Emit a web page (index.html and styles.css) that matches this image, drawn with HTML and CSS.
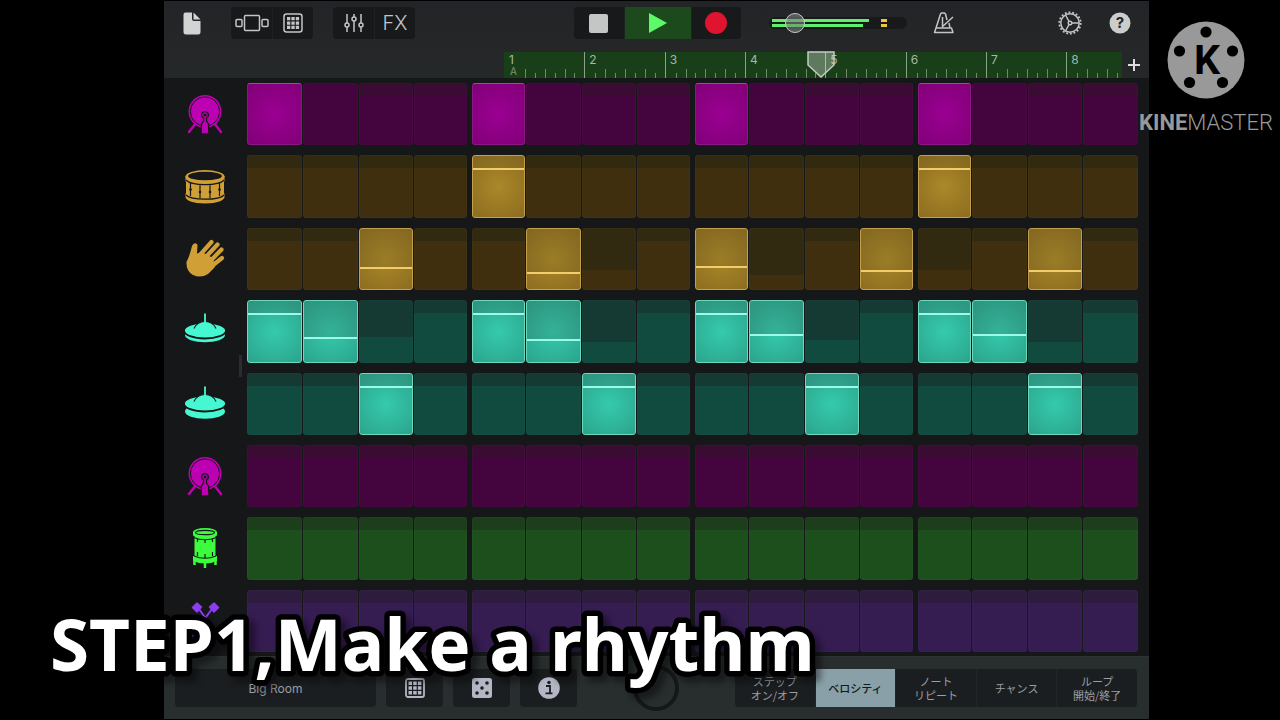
FILE: index.html
```html
<!DOCTYPE html>
<html lang="ja">
<head>
<meta charset="utf-8">
<meta name="viewport" content="width=device-width, initial-scale=1">
<title>Beat Sequencer</title>
<link rel="stylesheet" href="styles.css">
</head>
<body>
<svg class="sprite" aria-hidden="true">
  <symbol id="kick" viewBox="0 0 40 40">
    <path d="M11 29 4 38M29 29l7 9" stroke="currentColor" stroke-width="2.5" stroke-linecap="round"/>
    <circle cx="20" cy="17.5" r="16.5" fill="currentColor"/>
    <circle cx="20" cy="17.5" r="14.6" fill="none" stroke="#161719" stroke-width="1"/>
    <path d="M16 40l.5-10 2-3v-3a3.4 3.4 0 1 1 3 0v3l2 3 .5 10z" fill="currentColor" stroke="#161719" stroke-width="1.3"/>
    <circle cx="20" cy="21" r="1.6" fill="#161719"/>
  </symbol>
  <symbol id="snare" viewBox="0 0 40 40">
    <path d="M.5 9v21c0 3 7 6.500 19.500 6.500S39.500 33 39.500 30V9z" fill="currentColor"/>
    <ellipse cx="20" cy="9.500" rx="19.500" ry="6.500" fill="currentColor"/>
    <ellipse cx="20" cy="9" rx="17" ry="4.300" fill="#161719"/>
    <path d="M.8 13c3 3 11 4.600 19.200 4.600S36.500 16 39.200 13M1 28c3 3 11 4.200 19 4.200S36.500 31 39 28M5.500 16v13M15 18v13M25 18v13M34.500 16v13" fill="none" stroke="#161719" stroke-width="1.2"/>
    <path d="M0 14.500v12M40 14.500v12" stroke="#161719" stroke-width="2"/>
    <g fill="#161719"><circle cx="5.500" cy="22.500" r="1.300"/><circle cx="15" cy="25" r="1.300"/><circle cx="25" cy="25" r="1.300"/><circle cx="34.500" cy="22.500" r="1.300"/></g>
  </symbol>
  <symbol id="clap" viewBox="0 0 40 40">
    <path d="M8 5.500q3-2.500 4.500.5L12 14.500 17 13 28 19 30 28 23 35Q16 39.500 8 36 1 32 1.500 23 5 16 7 7z" fill="currentColor"/>
    <path d="M15 16 26.500 3M19 20 32.500 5.500M22.500 25 36.500 10.500M25 28.500 37 19" stroke="currentColor" stroke-width="4.200" stroke-linecap="round"/>
  </symbol>
  <symbol id="hat-closed" viewBox="0 0 40 40">
    <ellipse cx="20" cy="24" rx="20" ry="7.300" fill="currentColor"/>
    <ellipse cx="20" cy="19.500" rx="21" ry="8" fill="currentColor" stroke="#161719" stroke-width="1.800"/>
    <path d="M9 17.500C11 13 15 10.500 20 10.500S29 13 31 17.500" fill="currentColor" stroke="#161719" stroke-width="1.200"/>
    <path d="M20 2.500V12" stroke="currentColor" stroke-width="1.800"/>
  </symbol>
  <symbol id="hat-open" viewBox="0 0 40 40">
    <ellipse cx="20" cy="27.500" rx="20" ry="7.300" fill="currentColor"/>
    <ellipse cx="20" cy="19.500" rx="21" ry="8" fill="currentColor" stroke="#161719" stroke-width="1.800"/>
    <path d="M9 17.500C11 13 15 10.500 20 10.500S29 13 31 17.500" fill="currentColor" stroke="#161719" stroke-width="1.200"/>
    <path d="M20 2.500V12" stroke="currentColor" stroke-width="1.800"/>
  </symbol>
  <symbol id="tom" viewBox="0 0 40 40">
    <path d="M9.500 5v26q10.500 5 21 0V5z" fill="currentColor"/>
    <path d="M8 28v5q12 5 24 0v-5" fill="currentColor"/>
    <path d="M9.500 30v7M20 34v6M30.500 30v7" stroke="currentColor" stroke-width="2.500"/>
    <ellipse cx="20" cy="4.500" rx="12" ry="4.500" fill="currentColor"/>
    <path d="M8 4v3.500q12 6 24 0V4" fill="currentColor"/>
    <ellipse cx="20" cy="4.500" rx="9.500" ry="2.200" fill="none" stroke="#161719" stroke-width="1.200"/>
    <path d="M8.500 9.500q11.500 4.500 23 0M9 28q11 4.500 22 0M12.500 11v3M20 12v3M27.500 11v3M12.500 24v4M20 26v4M27.500 24v4" fill="none" stroke="#161719" stroke-width="1.200"/>
  </symbol>
  <symbol id="sticks" viewBox="0 0 40 40">
    <path d="M14 8 34 36M27 8 6 36" stroke="currentColor" stroke-width="2"/>
    <path d="M12 2l4.500 4-4.500 5-4.500-4.500zM29 2l-4.500 4 4.500 5 4.500-4.500z" fill="currentColor" stroke="currentColor" stroke-width="1.500" stroke-linejoin="round"/>
  </symbol>
  <symbol id="pads" viewBox="0 0 20 20">
    <rect x="1" y="1" width="18" height="18" rx="2.500" fill="none" stroke="currentColor" stroke-width="1.500"/>
    <path d="M4 4h3.300v3.300H4zM8.400 4h3.300v3.300H8.400zM12.800 4h3.300v3.300h-3.300zM4 8.400h3.300v3.300H4zM8.400 8.400h3.300v3.300H8.400zM12.800 8.400h3.300v3.300h-3.300zM4 12.800h3.300v3.300H4zM8.400 12.800h3.300v3.300H8.400zM12.800 12.800h3.300v3.300h-3.300z" fill="currentColor"/>
  </symbol>
</svg>

<main class="app">
  <header class="top">
    <div class="toolbar">
      <div class="tools-left">
        <button class="plain" aria-label="Songs">
          <svg width="18" height="23" viewBox="0 0 18 23"><path d="M2.500.5H9V7q0 2 2 2h6.500v11q0 2.500-2.500 2.500H3Q.5 22.500.5 20V2.500q0-2 2-2z" fill="#d2d3d3"/><path d="M10.500.5 17.500 7.500h-7z" fill="#d2d3d3"/></svg>
        </button>
        <div class="group">
          <button aria-label="Instruments"><svg width="34" height="18" viewBox="0 0 34 18"><g fill="none" stroke="currentColor" stroke-width="1.500"><rect x="9.500" y="1.500" width="15" height="15" rx="1"/><rect x="1" y="5.500" width="6" height="7" rx="1"/><rect x="27" y="5.500" width="6" height="7" rx="1"/></g></svg></button>
          <button aria-label="Grid view"><svg width="20" height="20"><use href="#pads"/></svg></button>
        </div>
        <div class="group">
          <button aria-label="Mixer"><svg width="20" height="20" viewBox="0 0 20 20"><g fill="none" stroke="currentColor" stroke-width="1.500"><path d="M3 1v9M3 14v5M10 1v3M10 8v11M17 1v9M17 14v5"/><circle cx="3" cy="12" r="2"/><circle cx="10" cy="6" r="2"/><circle cx="17" cy="12" r="2"/></g></svg></button>
          <button class="fx">FX</button>
        </div>
      </div>
      <div class="group transport">
        <button aria-label="Stop"><svg width="19" height="19"><rect width="19" height="19" rx="2" fill="#c4c5c5"/></svg></button>
        <button class="play" aria-label="Play"><svg width="18" height="20" viewBox="0 0 18 20"><path d="M0 0l18 10L0 20z" fill="#5cfa6a"/></svg></button>
        <button aria-label="Record"><svg width="22" height="22"><circle cx="11" cy="11" r="11" fill="#e1142f"/></svg></button>
      </div>
      <div class="tools-right">
        <div class="volume">
          <div class="meter"><i class="bar-l"></i><i class="bar-r"></i><b class="peak"></b></div>
          <input type="range" min="0" max="100" value="14" aria-label="Volume">
        </div>
        <button class="plain metronome" aria-label="Metronome"><svg width="22" height="22" viewBox="0 0 22 22"><g fill="none" stroke="currentColor" stroke-width="1.500" stroke-linejoin="round"><path d="M14 8 12.500 2Q12 1 11 1H9Q8 1 7.500 2L3 16M16 11l1 5M3 16H18.500L20 20.500H1.500zM9.500 5v9M9 15 20 5"/></g></svg></button>
        <button class="plain gear" aria-label="Settings"><svg width="24" height="24" viewBox="0 0 24 24"><g fill="none" stroke="currentColor"><circle cx="12" cy="12" r="10.700" stroke-width="1.800" stroke-dasharray="1.900 1.835"/><circle cx="12" cy="12" r="9.200" stroke-width="1.500"/><circle cx="12" cy="12" r="1.800" stroke-width="1.400"/><path d="M14 12h7M11 10.300 7.500 4M11 13.700 7.500 20" stroke-width="1.400"/></g></svg></button>
        <button class="plain" aria-label="Help"><svg width="22" height="22" viewBox="0 0 22 22"><circle cx="11" cy="11" r="10.500" fill="#cbcccc"/><text class="badge-char" x="11" y="16" text-anchor="middle">?</text></svg></button>
      </div>
    </div>
    <div class="timeline">
      <div class="ruler" id="ruler">
        <svg class="playhead" width="28" height="27" viewBox="0 0 28 27"><path d="M1 1h26v13L14 26 1 14z" fill="#ffffff" fill-opacity=".3" stroke="#c4cbc4" stroke-width="1.500"/></svg>
      </div>
      <button class="plain add" aria-label="Add section"><svg width="14" height="14" viewBox="0 0 14 14"><path d="M7 1v12M1 7h12" stroke="#dcdcdc" stroke-width="2"/></svg></button>
    </div>
  </header>

  <section class="tracks" id="tracks" aria-label="Pattern"><span class="handle"></span></section>

  <footer class="bottom">
    <button class="kit">Big Room</button>
    <button class="tile" aria-label="Patterns"><svg width="20" height="20" viewBox="0 0 20 20"><rect x="1" y="1" width="18" height="18" rx="2" fill="none" stroke="currentColor" stroke-width="1.800"/><path d="M3.500 3.500h3.500v3.500H3.500zM8.200 3.500h3.500v3.500H8.200zM12.900 3.500h3.500v3.500h-3.500zM3.500 8.200h3.500v3.500H3.500zM8.200 8.200h3.500v3.500H8.200zM12.900 8.200h3.500v3.500h-3.500zM3.500 12.900h3.500v3.500H3.500zM8.200 12.900h3.500v3.500H8.200zM12.900 12.900h3.500v3.500h-3.500z" fill="currentColor"/></svg></button>
    <button class="tile" aria-label="Randomize"><svg width="20" height="20" viewBox="0 0 20 20"><rect width="20" height="20" rx="2.500" fill="currentColor"/><g fill="#1b1d1f"><circle cx="5" cy="5" r="1.800"/><circle cx="15" cy="5" r="1.800"/><circle cx="10" cy="10" r="1.800"/><circle cx="5" cy="15" r="1.800"/><circle cx="15" cy="15" r="1.800"/></g></svg></button>
    <button class="tile" aria-label="Info"><svg width="22" height="22" viewBox="0 0 22 22"><circle cx="11" cy="11" r="10.800" fill="currentColor"/><circle cx="11" cy="5.500" r="1.700" fill="#1b1d1f"/><path d="M8 9h4v7M7.500 16.300h7" fill="none" stroke="#1b1d1f" stroke-width="1.800"/></svg></button>
    <button class="knob" aria-label="Home"></button>
    <div class="modes">
      <button>ステップ<br>オン/オフ</button>
      <button class="selected" aria-pressed="true">ベロシティ</button>
      <button>ノート<br>リピート</button>
      <button>チャンス</button>
      <button>ループ<br>開始/終了</button>
    </div>
  </footer>
</main>

<aside class="brand">
  <svg width="78" height="78" viewBox="0 0 78 78"><circle cx="39" cy="39" r="38.500" fill="#999"/><g fill="#000"><circle cx="39" cy="11" r="5.600"/><circle cx="12.500" cy="30" r="5.600"/><circle cx="65.500" cy="30" r="5.600"/><circle cx="22.500" cy="61.500" r="5.600"/><circle cx="55.500" cy="61.500" r="5.600"/></g><text class="brand-k" x="40" y="53" text-anchor="middle">K</text></svg>
  <p><b>KINE</b>MASTER</p>
</aside>
<svg class="caption" width="840" height="100"><text x="20" y="67">STEP1,Make a rhythm</text></svg>
<script src="app.js"></script>
</body>
</html>
```

FILE: styles.css
```css
* { box-sizing: border-box; }
body {
  margin: 0;
  min-height: 100vh;
  padding: 1px 131px 1px 164px;
  display: flex;
  position: relative;
  overflow: hidden;
  background: #000;
  color: #c4c5c6;
  font-family: Inter, "Noto Sans CJK JP", sans-serif;
}
button { margin: 0; padding: 0; border: 0; background: none; color: inherit; font: inherit; }
button svg { display: block; }
.sprite { position: absolute; width: 0; height: 0; }
.app { flex: 1; min-width: 0; display: flex; flex-direction: column; background: #161719; }

.top { background: linear-gradient(#232427, #252829); height: 77px; display: flex; flex-direction: column; justify-content: space-between; }
.toolbar { display: grid; grid-template-columns: 1fr auto 1fr; align-items: center; padding: 6px 18px 0 19px; }
.tools-left, .tools-right { display: flex; align-items: center; }
.tools-left { gap: 20px; }
.tools-left .plain { margin-right: 10px; }
.group { display: flex; height: 32px; border-radius: 4px; background: #17191a; overflow: hidden; }
.group button { width: 41px; display: flex; align-items: center; justify-content: center; }
.group button + button { border-left: 1px solid #1f2223; }
.fx { font-size: 20px; font-weight: 300; }
.transport button { width: 50px; }
.transport .play { width: 67px; background: #1d4a1d; }
.tools-right { padding-left: 28px; }
.plain { display: grid; place-items: center; }
.metronome { margin-left: 26px; }
.gear { margin-left: auto; margin-right: 27px; }
.volume { width: 138px; height: 20px; display: grid; align-items: center; }
.volume > * { grid-area: 1 / 1; }
.meter { height: 12px; border-radius: 6px; background: #17191a; display: grid; grid-template-columns: 3px 97px 12px 6px 1fr; gap: 2px 0; padding: 2px 0; }
.meter i { background: #5ef06c; grid-column: 2; }
.meter .bar-r { margin-right: 6px; }
.meter .peak { grid-column: 4; grid-row: 1 / 3; background: linear-gradient(#edc53f 3px, #17191a 3px, #17191a 5px, #edc53f 5px); }
.volume input { width: 100%; height: 20px; margin: 0; appearance: none; background: none; }
.volume input::-webkit-slider-thumb { appearance: none; width: 20px; height: 20px; border: 1px solid #c6cbc6; border-radius: 50%; background: rgba(120, 130, 120, .6); }

.badge-char { font: 700 15px Inter, sans-serif; fill: #232427; }

.timeline { display: flex; align-items: center; padding: 0 8px 0 340px; }
.ruler { position: relative; flex: 1; height: 26px; display: flex; background: #193f18; }
.bar { flex: 0 0 13%; min-width: 0; height: 26px; border-left: 1px solid #8aa18a; position: relative; display: flex; align-items: flex-end; }
.bar:first-of-type { border-left-color: transparent; }
.bar:nth-of-type(8) { flex: 1; overflow: hidden; }
.bar:nth-of-type(8) .tick { flex: 0 0 10px; }
.bar label { position: absolute; left: 4px; top: 0; font-size: 12px; line-height: 15px; color: #a5b7a4; }
.bar small { position: absolute; left: 5px; top: 13px; font-size: 10px; line-height: 12px; color: #7c947b; }
.tick { flex: 1; height: 5px; border-left: 1px solid #6d8a6c; }
.tick:nth-of-type(odd) { height: 9px; }
.tick:first-of-type, .bar:first-of-type .tick:nth-of-type(2) { border-color: transparent; }
.playhead { position: absolute; left: 49%; top: -1px; z-index: 1; }
.add { margin-left: 5px; }

.tracks { position: relative; flex: 1; display: flex; flex-direction: column; gap: 10px; padding: 5px 11px 4px 0; }
.handle { position: absolute; left: 75px; top: 277px; width: 3px; height: 22px; background: #2b2c2f; }
.track { flex: 1; display: grid; grid-template-columns: 82px 1fr; gap: 1px; min-height: 40px; }
.track-icon { display: grid; place-items: center; color: var(--icon); }
.steps { display: grid; grid-template-columns: repeat(16, 1fr); gap: 1px; }
.step { position: relative; border-radius: 3px; border: 1px solid rgba(255, 255, 255, .02); background: linear-gradient(var(--off-top) var(--level), var(--off) var(--level)); background-origin: border-box; }
.step:nth-child(4n) { margin-right: 2px; }
.step:nth-child(4n + 1) { margin-left: 2px; }
.step:first-child, .step:last-child { margin: 0; }
.step.on {
  border-color: var(--edge);
  background:
    linear-gradient(transparent calc(var(--level) - 1px), var(--line) calc(var(--level) - 1px), var(--line) calc(var(--level) + 1px), transparent calc(var(--level) + 1px)),
    linear-gradient(var(--shade) var(--level), transparent var(--level)),
    radial-gradient(circle at 50% 50%, var(--on), var(--on-edge) 40px);
  background-origin: border-box;
}
.purple { --icon: #bd00b1; --off: #44043e; --off-top: #3a0c34; --on: #9a0091; --on-edge: #810078; --edge: #8c1784; --line: #ae38a6; --shade: transparent; }
.purple .on { border-top-color: #b23aaa; }
.gold { --icon: #d0a036; --off: #3f2f0f; --off-top: #322911; --on: #ab8829; --on-edge: #8c6c20; --edge: #c2a04e; --line: #f3cd6c; --shade: rgba(90, 80, 30, .2); }
.teal { --icon: #46f8d2; --off: #114a3e; --off-top: #143a33; --on: #35caad; --on-edge: #2ba48c; --edge: #6cd9bd; --line: #9dfae8; --shade: rgba(50, 80, 70, .2); }
.green { --icon: #3bfd3d; --off: #1d4f1d; --off-top: #1c3e1b; }
.violet { --icon: #8d3df0; --off: #351c51; --off-top: #2d1c3e; }

.bottom { height: 63px; display: flex; align-items: center; gap: 10px; padding: 0 12px 0 11px; background: #282d2e; border-top: 1px solid #2d3233; }
.bottom button { height: 38px; color: #9b9fa4; font-size: 12px; }
.bottom .kit { flex: 0 0 201px; border-radius: 4px; background: #1b1e20; }
.bottom .tile { flex: 0 0 57px; display: grid; place-items: center; border-radius: 4px; background: #1b1e20; color: #b3b6c4; }
.bottom .knob { width: 46px; height: 46px; margin: 0 auto; border: 4px solid #151819; border-radius: 50%; }
.modes { flex: 0 0 402px; display: flex; border-radius: 4px; background: #1b1e20; overflow: hidden; }
.modes button { flex: 1; line-height: 14px; font-size: 11px; font-family: "Noto Sans CJK JP", sans-serif; }
.modes button + button { border-left: 1px solid #202426; }
.modes .selected { background: #89a0a8; color: #14191c; font-weight: 500; }

.brand { position: absolute; top: 21px; right: 7px; display: flex; flex-direction: column; align-items: center; color: #999; }
.brand p { margin: 10px 0 0; font: 300 22px/28px Roboto, sans-serif; }
.brand b { font-weight: 700; }
.brand-k { font: 700 41px Roboto, sans-serif; fill: #000; }
.caption {
  position: absolute; left: 30px; bottom: 16px;
  font: 700 71px "Noto Sans", sans-serif;
  fill: #fff; stroke: #000; stroke-width: 11px; stroke-linejoin: round; paint-order: stroke fill;
  filter: drop-shadow(6px 6px 3px rgba(0, 0, 0, .4));
  pointer-events: none;
}
```

FILE: app.js
```javascript
// Each track: icon, colour, name, active steps {index: level}, level overrides for inactive steps.
// Levels are the distance of the velocity line from the top of a step, in percent.
const tracks = [
  ["kick", "purple", "Kick", { 0: 0, 4: 0, 8: 0, 12: 0 }, { 1: 0, 5: 0, 9: 0, 13: 0 }],
  ["snare", "gold", "Snare", { 4: 22, 12: 22 }, {}],
  ["clap", "gold", "Clap", { 2: 64, 5: 73, 8: 63, 11: 70, 14: 69 }, { 6: 68, 9: 76, 12: 68 }],
  ["hat-closed", "teal", "Closed hat", { 0: 22, 1: 60, 4: 22, 5: 63, 8: 22, 9: 56, 12: 22, 13: 55 }, { 2: 58, 6: 67, 10: 64, 14: 66 }],
  ["hat-open", "teal", "Open hat", { 2: 22, 6: 22, 10: 22, 14: 22 }, {}],
  ["kick", "purple", "Kick 2", {}, {}],
  ["tom", "green", "Tom", {}, {}],
  ["sticks", "violet", "Percussion", {}, {}]
];

const board = document.getElementById("tracks");
for (const [icon, colour, name, on, off] of tracks) {
  const row = document.createElement("div");
  row.className = `track ${colour}`;
  let steps = "";
  for (let i = 0; i < 16; i++) {
    const active = i in on;
    const level = active ? on[i] : (off[i] ?? 21);
    steps += `<button class="step${active ? " on" : ""}" aria-pressed="${active}" aria-label="${name} ${i + 1}" style="--level:${level}%"></button>`;
  }
  row.innerHTML = `<button class="track-icon" aria-label="${name}"><svg width="40" height="40" overflow="visible"><use href="#${icon}"/></svg></button><div class="steps">${steps}</div>`;
  board.append(row);
}

const ruler = document.getElementById("ruler");
for (let n = 1; n <= 8; n++) {
  const bar = document.createElement("div");
  bar.className = "bar";
  bar.innerHTML = `<label>${n}</label>${n === 1 ? "<small>A</small>" : ""}${'<span class="tick"></span>'.repeat(8)}`;
  ruler.append(bar);
}
```
